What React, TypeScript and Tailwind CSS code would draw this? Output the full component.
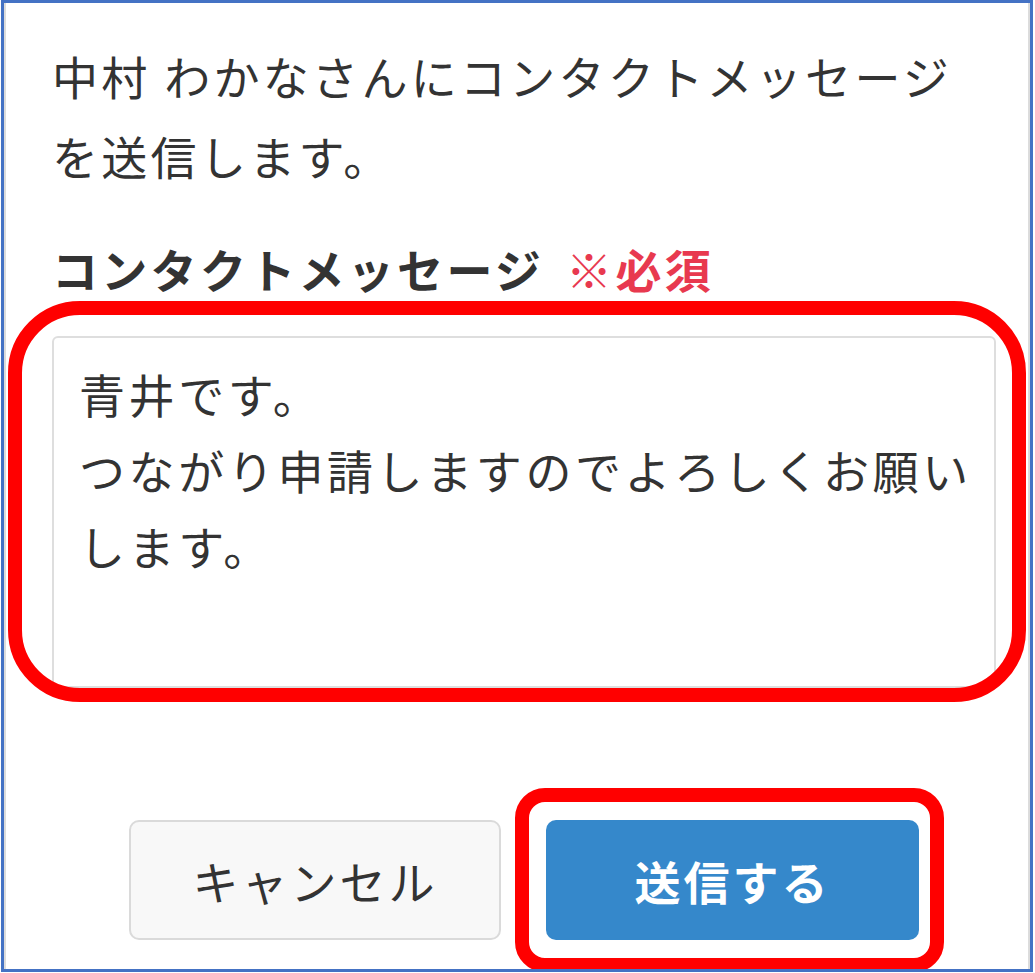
import React from "react";

export default function App() {
  const font = { fontFamily: '"Noto Sans CJK JP", "Noto Sans", sans-serif' };
  return (
    <div className="w-[1035px] h-[973px] bg-white overflow-hidden" style={font}>
      <div className="ml-[1px] w-[1032px] h-[972px] border-[3px] border-[#4472c4] overflow-hidden">
        <div className="h-full border-x-2 border-[#dcdcdc] bg-white">
          <div className="ml-[46px] w-[944px] pt-[32px] text-[#333] text-[46px] tracking-[3.3px]">
            <p className="leading-[80px]">
              中村 わかなさんにコンタクトメッセージ
              <br />
              を送信します。
            </p>
            <div className="mt-[33px] leading-[80px] font-bold flex items-center">
              <span>コンタクトメッセージ</span>
              <span className="ml-[22px] text-[#e8394f]">※必須</span>
            </div>
            <div className="relative mt-[28px]">
              <div className="h-[352px] border-2 border-[#dedede] rounded-[6px] bg-white pt-[17px] pl-[25px] leading-[76px] tracking-[3.6px]">
                <div>青井です。</div>
                <div>つながり申請しますのでよろしくお願い</div>
                <div>します。</div>
              </div>
              <div className="absolute left-[-44px] right-[-30px] top-[-35px] bottom-[-14px] border-[14px] border-[#ff0000] rounded-[72px] pointer-events-none" />
            </div>
            <div className="mt-[132px] flex justify-center gap-[45px]">
              <button className="w-[372px] h-[120px] rounded-[10px] border-2 border-[#dadada] bg-[#f8f8f8] text-[#333] text-[46px] tracking-[3px]">
                キャンセル
              </button>
              <div className="relative">
                <button className="w-[373px] h-[120px] rounded-[10px] bg-[#3588cb] text-white font-bold text-[46px] tracking-[3px]">
                  送信する
                </button>
                <div className="absolute left-[-31px] right-[-25px] top-[-32px] bottom-[-32px] border-[14px] border-[#ff0000] rounded-[30px] pointer-events-none" />
              </div>
            </div>
          </div>
        </div>
      </div>
    </div>
  );
}
